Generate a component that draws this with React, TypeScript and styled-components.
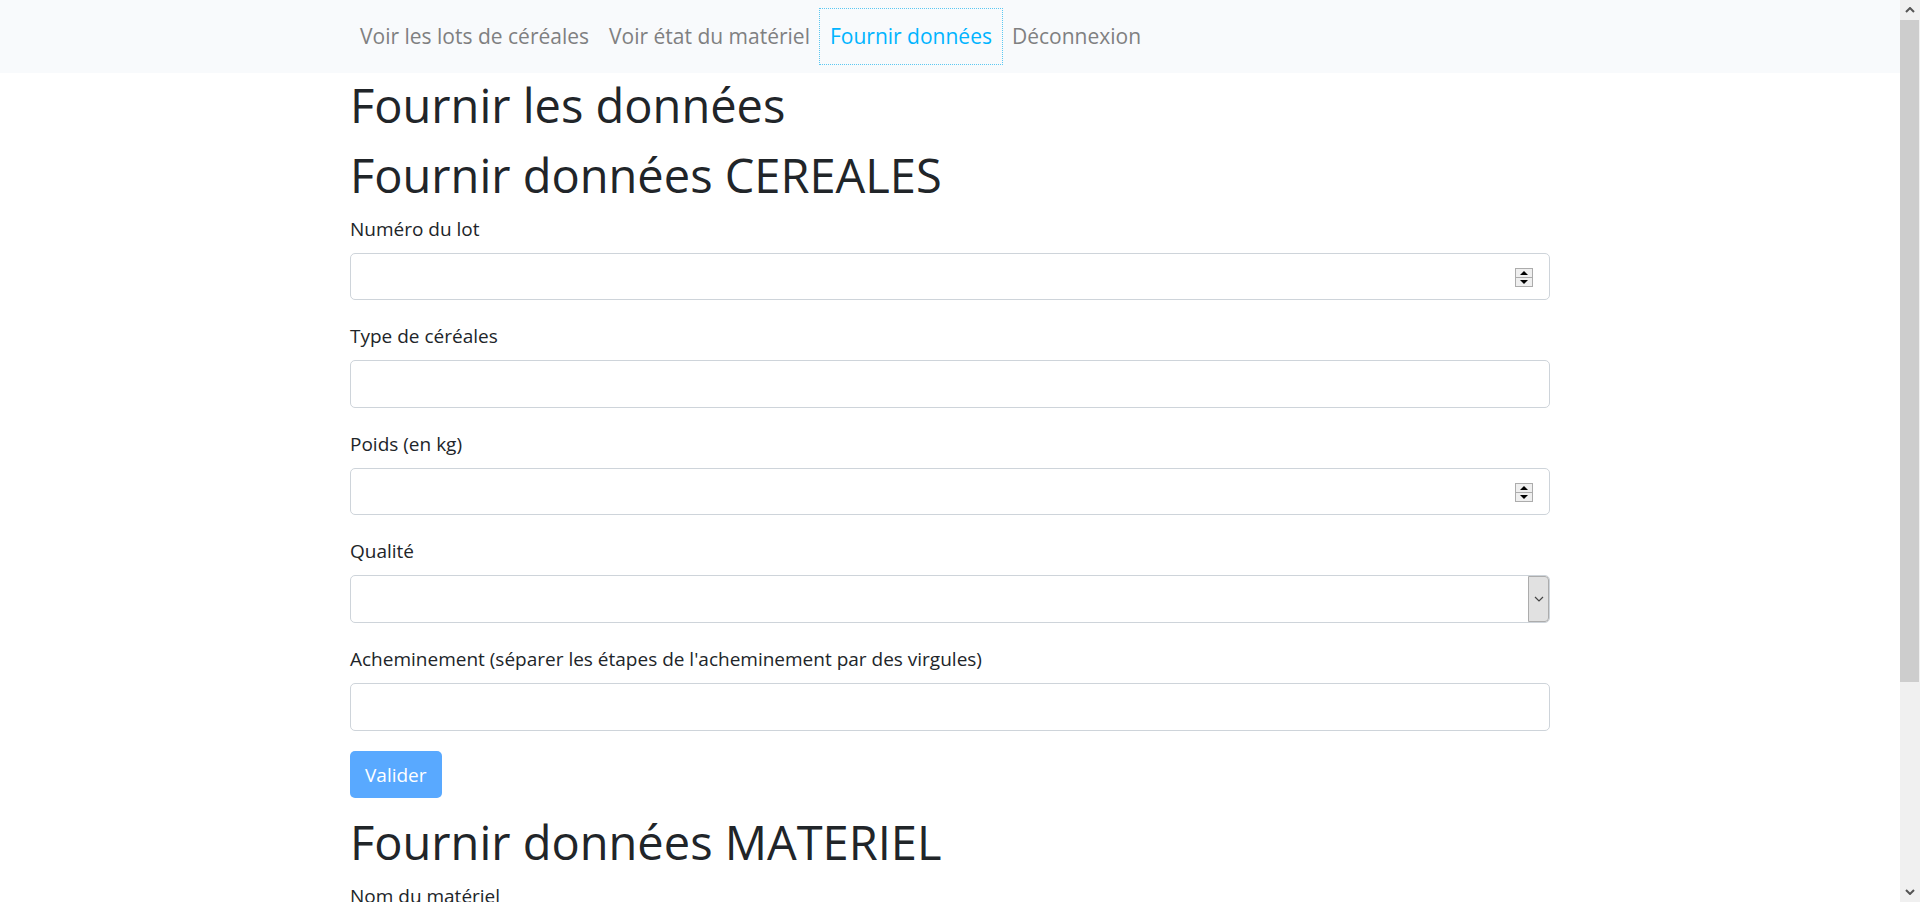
import React, { useRef } from "react";
import styled, { createGlobalStyle, css } from "styled-components";

const GlobalStyle = createGlobalStyle`
  *, *::before, *::after { box-sizing: border-box; }
  body {
    margin: 0;
    background: #fff;
    color: #212529;
    font-family: "Segoe UI", "Open Sans", "Liberation Sans", sans-serif;
    font-size: 19px;
    line-height: 30px;
    overflow: hidden;
  }
`;

const Shell = styled.div`
  display: grid;
  grid-template-columns: minmax(0, 1fr) 20px;
  height: 100vh;
`;

const Page = styled.div`
  overflow-y: auto;
  scrollbar-width: none;
`;

const Container = styled.div`
  max-width: 1200px;
  margin: 0 auto;
`;

const NavBar = styled.nav`
  padding: 9px 0;
  background: #f8fafc;
`;

const NavList = styled.ul`
  display: flex;
  margin: 0;
  padding: 0;
  list-style: none;
`;

const NavLink = styled.a<{ $active?: boolean }>`
  display: block;
  padding: 9px 10px;
  font-size: 21px;
  line-height: 37px;
  text-decoration: none;
  white-space: nowrap;
  color: #7f8081;
  ${({ $active }) =>
    $active &&
    css`
      color: #00b4ff;
      outline: 1px dotted #5cc8f2;
    `}
`;

const Title = styled.h1`
  margin: 0;
  padding: 2px 0 8px;
  font-size: 47px;
  font-weight: 400;
  line-height: 60px;
`;

const Form = styled.form`
  margin-bottom: 12px;
`;

const Group = styled.div`
  margin-bottom: 20px;
`;

const Label = styled.label`
  display: block;
  width: fit-content;
  padding: 1px 0 9px;
`;

const controlStyle = css`
  display: block;
  width: 100%;
  height: 48px;
  padding: 8px 15px;
  border: 1px solid #ced4da;
  border-radius: 5px;
  background: #fff;
  color: #495057;
  font: inherit;
`;

const TextInput = styled.input`
  ${controlStyle}
`;

const NumberInput = styled.input`
  ${controlStyle}
  height: 47px;
  appearance: textfield;
  -moz-appearance: textfield;
  &::-webkit-inner-spin-button { appearance: none; margin: 0; }
`;

const Control = styled.div`
  position: relative;
`;

const Spinner = styled.div`
  position: absolute;
  top: 1px;
  bottom: 0;
  right: 17px;
  display: flex;
  flex-direction: column;
  justify-content: center;
`;

const SpinButton = styled.button`
  display: flex;
  align-items: center;
  justify-content: center;
  width: 18px;
  height: 10px;
  padding: 0;
  border: 1px solid #acacac;
  background: #efefef;
  & + & { margin-top: -1px; }
`;

const Select = styled.select`
  ${controlStyle}
  appearance: none;
`;

const SelectArrow = styled.span`
  position: absolute;
  top: 1px;
  bottom: 1px;
  right: 1px;
  display: flex;
  align-items: center;
  justify-content: center;
  width: 21px;
  border: 1px solid #acacac;
  border-radius: 0 4px 4px 0;
  background: #e1e1e1;
  pointer-events: none;
`;

const Submit = styled.button`
  display: block;
  height: 47px;
  padding: 0 15px;
  border: 0;
  border-radius: 5px;
  background: #59a9ff;
  color: #fff;
  font: inherit;
`;

const ScrollBar = styled.div`
  display: flex;
  flex-direction: column;
  background: #f0f0f0;
`;

const ScrollEnd = styled.div`
  display: flex;
  flex: none;
  align-items: center;
  justify-content: center;
  height: 20px;
`;

const Track = styled.div`
  flex: 1;
  padding-right: 1px;
`;

const Thumb = styled.div`
  height: calc(77% - 2px);
  background: #cdcdcd;
`;

const Chevron = ({ up = false, thin = false }) => (
  <svg width="10" height="6" viewBox="0 0 10 6" fill="none" stroke={thin ? "#444" : "#555"} strokeWidth={thin ? 1.2 : 2} aria-hidden="true">
    <path d={up ? "M1 5 5 1 9 5" : "M1 1 5 5 9 1"} />
  </svg>
);

const Triangle = ({ up = false }) => (
  <svg width="8" height="4" viewBox="0 0 8 4" aria-hidden="true">
    <path d={up ? "M0 4 4 0 8 4Z" : "M0 0 4 4 8 0Z"} />
  </svg>
);

function TextField({ id, label }: { id: string; label: string }) {
  return (
    <Group>
      <Label htmlFor={id}>{label}</Label>
      <TextInput id={id} name={id} type="text" />
    </Group>
  );
}

function NumberField({ id, label }: { id: string; label: string }) {
  const input = useRef<HTMLInputElement>(null);
  return (
    <Group>
      <Label htmlFor={id}>{label}</Label>
      <Control>
        <NumberInput ref={input} id={id} name={id} type="number" />
        <Spinner>
          <SpinButton type="button" tabIndex={-1} onClick={() => input.current?.stepUp()}>
            <Triangle up />
          </SpinButton>
          <SpinButton type="button" tabIndex={-1} onClick={() => input.current?.stepDown()}>
            <Triangle />
          </SpinButton>
        </Spinner>
      </Control>
    </Group>
  );
}

const links = ["Voir les lots de céréales", "Voir état du matériel", "Fournir données", "Déconnexion"];

export default function App() {
  return (
    <Shell>
      <GlobalStyle />
      <Page>
        <NavBar>
          <Container>
            <NavList>
              {links.map((text) => (
                <li key={text}>
                  <NavLink href="#" $active={text === "Fournir données"}>{text}</NavLink>
                </li>
              ))}
            </NavList>
          </Container>
        </NavBar>
        <Container as="main">
          <Title>Fournir les données</Title>
          <Title>Fournir données CEREALES</Title>
          <Form onSubmit={(e) => e.preventDefault()}>
            <NumberField id="lot" label="Numéro du lot" />
            <TextField id="type" label="Type de céréales" />
            <NumberField id="poids" label="Poids (en kg)" />
            <Group>
              <Label htmlFor="qualite">Qualité</Label>
              <Control>
                <Select id="qualite" name="qualite" />
                <SelectArrow><Chevron thin /></SelectArrow>
              </Control>
            </Group>
            <TextField id="acheminement" label="Acheminement (séparer les étapes de l'acheminement par des virgules)" />
            <Submit type="submit">Valider</Submit>
          </Form>
          <Title>Fournir données MATERIEL</Title>
          <Form onSubmit={(e) => e.preventDefault()}>
            <TextField id="materiel" label="Nom du matériel" />
          </Form>
        </Container>
      </Page>
      <ScrollBar aria-hidden="true">
        <ScrollEnd><Chevron up /></ScrollEnd>
        <Track><Thumb /></Track>
        <ScrollEnd><Chevron /></ScrollEnd>
      </ScrollBar>
    </Shell>
  );
}
